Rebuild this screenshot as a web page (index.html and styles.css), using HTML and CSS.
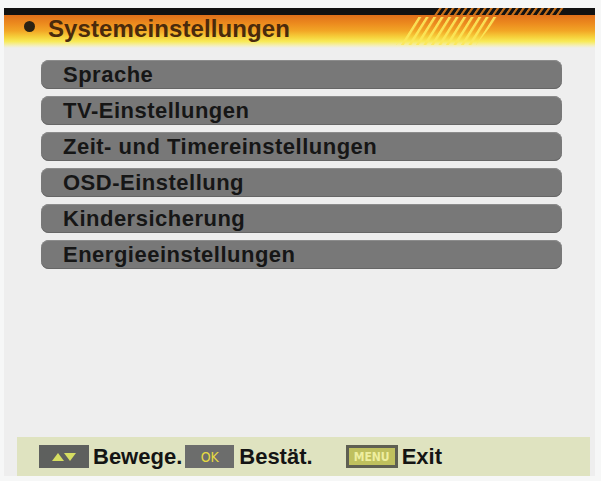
FILE: index.html
```html
<!DOCTYPE html>
<html lang="de">
<head>
<meta charset="utf-8">
<title>Systemeinstellungen</title>
<link rel="stylesheet" href="styles.css">
</head>
<body>
<div class="screen">
  <div class="header">
    <div class="topbar"></div>
    <div class="band">
      <span class="dot"></span>
      <h1 class="title">Systemeinstellungen</h1>
    </div>
    <svg class="hatch" width="591" height="40" viewBox="0 0 591 40" aria-hidden="true">
      <defs>
        <pattern id="ystripe" width="7.5" height="40" patternUnits="userSpaceOnUse" patternTransform="skewX(-32)">
          <rect x="0" y="0" width="3" height="40" fill="#fbe85a"/>
        </pattern>
        <pattern id="ostripe" width="6.4" height="8" patternUnits="userSpaceOnUse" patternTransform="skewX(-35)">
          <rect x="0" y="0" width="2.6" height="8" fill="#c8701a"/>
        </pattern>
      </defs>
      <polygon points="432,0 560,0 556,7 428,7" fill="url(#ostripe)"/>
      <polygon points="414,9 494,9 472,37 392,37" fill="url(#ystripe)" opacity="0.9"/>
    </svg>
  </div>
  <div class="content">
    <ul class="menu">
      <li class="item">Sprache</li>
      <li class="item">TV-Einstellungen</li>
      <li class="item">Zeit- und Timereinstellungen</li>
      <li class="item">OSD-Einstellung</li>
      <li class="item">Kindersicherung</li>
      <li class="item">Energieeinstellungen</li>
    </ul>
    <div class="footer">
      <span class="key key-arrows">
        <svg width="26" height="10" viewBox="0 0 26 10" aria-hidden="true">
          <polygon points="1,9 7,1 13,9" fill="#d6de62"/>
          <polygon points="13,1 25,1 19,9" fill="#d6de62"/>
        </svg>
      </span>
      <span class="label l-move">Bewege.</span>
      <span class="key key-ok">OK</span>
      <span class="label l-ok">Bestät.</span>
      <span class="key key-menu">MENU</span>
      <span class="label">Exit</span>
    </div>
  </div>
</div>
</body>
</html>
```

FILE: styles.css
```css
html, body {
  margin: 0;
  padding: 0;
  background: #f6f7f7;
}

body {
  font-family: "Liberation Sans", Arial, sans-serif;
  width: 601px;
  height: 481px;
  overflow: hidden;
}

.screen {
  margin: 8px 0 0 4px;
  width: 591px;
  background: #eeeeee;
}

.header {
  position: relative;
  height: 40px;
}

.topbar {
  height: 7px;
  background: #121212;
}

.band {
  height: 33px;
  display: flex;
  align-items: flex-start;
  background: linear-gradient(#e0701a 0%, #ec8a1e 25%, #f2a626 48%, #f6cf3a 66%, #f8ea58 80%, #f3efc4 94%, #eeeeee 100%);
}

.dot {
  width: 11px;
  height: 11px;
  border-radius: 50%;
  background: #2b2214;
  margin: 6px 0 0 20px;
  flex: none;
}

.title {
  margin: 0 0 0 13px;
  font-size: 24px;
  line-height: 28px;
  font-weight: bold;
  color: #4a2a0c;
  letter-spacing: 0.1px;
}

.hatch {
  position: absolute;
  left: 0;
  top: 0;
}

.content {
  padding-top: 12px;
}

.menu {
  list-style: none;
  margin: 0 0 0 37px;
  padding: 0;
  width: 521px;
  display: flex;
  flex-direction: column;
  gap: 7px;
}

.item {
  height: 29px;
  line-height: 29px;
  border-radius: 8px;
  background: #787878;
  box-shadow: inset 0 1px 0 #8c8c8c, inset 0 -1px 0 #666666;
  color: #161616;
  font-size: 22px;
  font-weight: bold;
  padding-left: 22px;
  letter-spacing: 0.5px;
}

.footer {
  margin: 168px 0 0 13px;
  width: 573px;
  height: 39px;
  background: #dfe3c0;
  display: flex;
  align-items: center;
  padding-left: 22px;
  box-sizing: border-box;
}

.key {
  height: 23px;
  box-sizing: border-box;
  display: flex;
  align-items: center;
  justify-content: center;
  flex: none;
}

.key-arrows {
  width: 50px;
  background: #5e605e;
  padding-top: 1px;
}

.key-ok {
  width: 49px;
  background: #6c6d6c;
  color: #e6da42;
  font-size: 14px;
  font-family: "DejaVu Sans Condensed", "Liberation Sans Narrow", sans-serif;
  margin-left: 3px;
}

.key-menu {
  width: 52px;
  background: #bfc05e;
  border: 3px solid #5e5f52;
  color: #eeeea0;
  font-size: 12px;
  font-family: "DejaVu Sans Condensed", "Liberation Sans Narrow", sans-serif;
  font-weight: bold;
  margin-left: 33px;
}

.label {
  font-size: 22px;
  font-weight: bold;
  color: #141414;
  margin-left: 4px;
  line-height: 39px;
}

.l-ok {
  margin-left: 5px;
}
```
